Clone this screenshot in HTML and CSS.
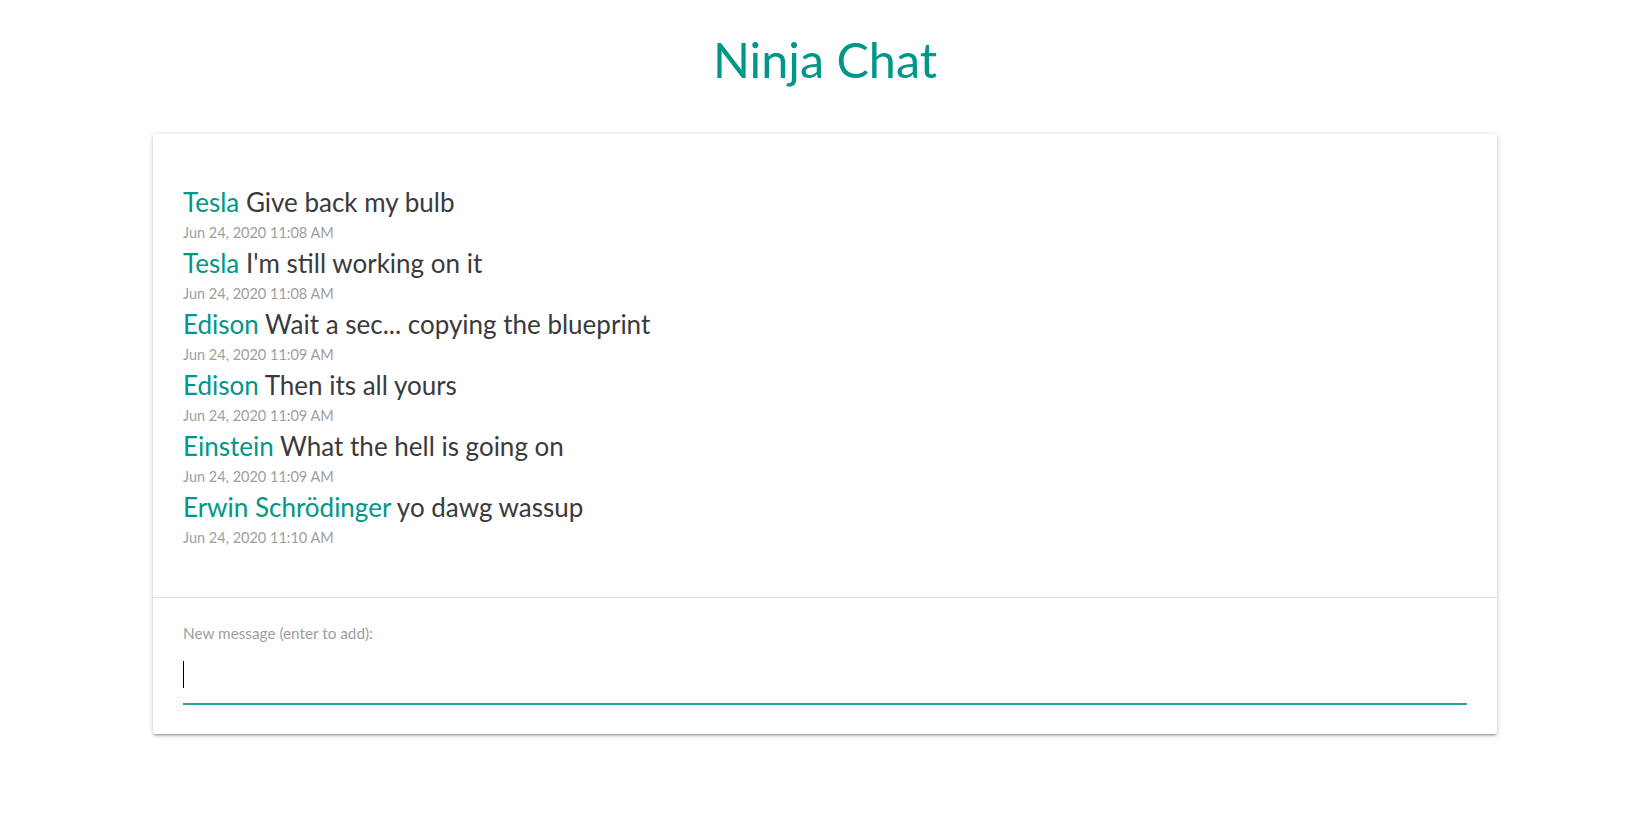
FILE: index.html
```html
<!DOCTYPE html>
<html lang="en">
<head>
<meta charset="utf-8">
<title>Ninja Chat</title>
<link rel="stylesheet" href="styles.css">
</head>
<body>
<div class="container">
  <h1 class="title">Ninja Chat</h1>
  <div class="card">
    <ul class="messages">
      <li class="message">
        <div class="line"><span class="name">Tesla</span> <span class="text">Give back my bulb</span></div>
        <div class="time">Jun 24, 2020 11:08 AM</div>
      </li>
      <li class="message">
        <div class="line"><span class="name">Tesla</span> <span class="text">I'm still working on it</span></div>
        <div class="time">Jun 24, 2020 11:08 AM</div>
      </li>
      <li class="message">
        <div class="line"><span class="name">Edison</span> <span class="text">Wait a sec... copying the blueprint</span></div>
        <div class="time">Jun 24, 2020 11:09 AM</div>
      </li>
      <li class="message">
        <div class="line"><span class="name">Edison</span> <span class="text">Then its all yours</span></div>
        <div class="time">Jun 24, 2020 11:09 AM</div>
      </li>
      <li class="message">
        <div class="line"><span class="name">Einstein</span> <span class="text">What the hell is going on</span></div>
        <div class="time">Jun 24, 2020 11:09 AM</div>
      </li>
      <li class="message">
        <div class="line"><span class="name">Erwin Schrödinger</span> <span class="text">yo dawg wassup</span></div>
        <div class="time">Jun 24, 2020 11:10 AM</div>
      </li>
    </ul>
    <form class="new-message">
      <label class="label" for="msg">New message (enter to add):</label>
      <div class="field">
        <input class="input" id="msg" type="text">
        <span class="caret"></span>
      </div>
    </form>
  </div>
</div>
</body>
</html>
```

FILE: styles.css
```css
html, body {
  margin: 0;
  padding: 0;
  background: #ffffff;
}
body {
  font-family: Lato, "Open Sans", sans-serif;
  color: #333333;
  padding-bottom: 60px;
}
.container {
  margin: 0 134px 0 153px;
  padding-bottom: 20px;
}
.title {
  margin: 0;
  padding-top: 31px;
  font-size: 48.5px;
  line-height: 57px;
  font-weight: 400;
  text-align: center;
  color: #009688;
}
.card {
  margin-top: 46px;
  background: #fff;
  border-radius: 2px;
  box-shadow: 0 2px 2px 0 rgba(0,0,0,0.14), 0 3px 1px -2px rgba(0,0,0,0.12), 0 1px 5px 0 rgba(0,0,0,0.2);
}
.messages {
  list-style: none;
  margin: 0;
  padding: 51px 30px 46px;
  border-bottom: 1px solid #e0e0e0;
}
.message {
  margin: 0;
}
.line {
  font-size: 26px;
  line-height: 34px;
}
.name {
  color: #009688;
}
.text {
  color: #3a3a3a;
}
.time {
  font-size: 14.5px;
  line-height: 27px;
  color: #9e9e9e;
}
.new-message {
  margin: 0;
  padding: 25px 30px 30px;
}
.label {
  display: block;
  font-size: 15.3px;
  line-height: 20px;
  color: #9e9e9e;
}
.field {
  position: relative;
  margin-top: 13px;
}
.input {
  display: block;
  box-sizing: content-box;
  width: 100%;
  height: 47px;
  padding: 0;
  margin: 0;
  border: none;
  border-bottom: 1px solid #26a69a;
  box-shadow: 0 1px 0 0 #26a69a;
  outline: none;
  background: transparent;
  font-family: inherit;
  font-size: 16px;
  color: #333;
}
.caret {
  position: absolute;
  left: 0;
  top: 5px;
  width: 1px;
  height: 27px;
  background: #000;
}
```
